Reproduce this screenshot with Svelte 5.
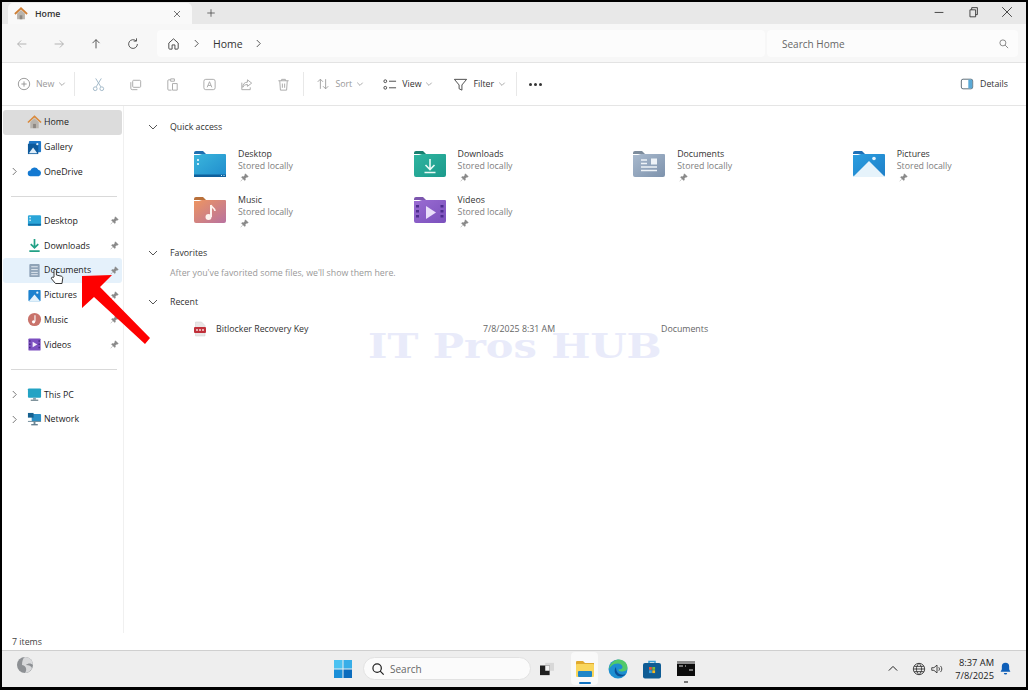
<script>
	const navTop = [
		{ name: 'Home', icon: 'home', active: true },
		{ name: 'Gallery', icon: 'gallery' },
		{ name: 'OneDrive', icon: 'cloud', arrow: true }
	];
	const pinned = [
		{ name: 'Desktop', icon: 'desktop' },
		{ name: 'Downloads', icon: 'downloads' },
		{ name: 'Documents', icon: 'documents', hover: true },
		{ name: 'Pictures', icon: 'pictures' },
		{ name: 'Music', icon: 'music' },
		{ name: 'Videos', icon: 'videos' }
	];
	const navBottom = [
		{ name: 'This PC', icon: 'pc', arrow: true },
		{ name: 'Network', icon: 'network', arrow: true }
	];
	const folders = [
		{ name: 'Desktop', tab: '#1f6fb0', from: '#3bb6dc', to: '#1f8ccd', kind: 'desktop' },
		{ name: 'Downloads', tab: '#17806f', from: '#2fb5a0', to: '#1c9a8c', kind: 'downloads' },
		{ name: 'Documents', tab: '#7d8c9c', from: '#a9bace', to: '#7d92ac', kind: 'documents' },
		{ name: 'Pictures', tab: '#1d70b8', from: '#2a9ee0', to: '#1f7fc8', kind: 'pictures' },
		{ name: 'Music', tab: '#b9703a', from: '#ee9560', to: '#b872a0', kind: 'music' },
		{ name: 'Videos', tab: '#7c56ae', from: '#9a6cd2', to: '#7a50bc', kind: 'videos' }
	];
	const actions = [
		{ d: 'M5 2l6 9M11 2L5 11' },
		{ d: 'M6 3.5h6.5a1 1 0 011 1V10a1 1 0 01-1 1H6a1 1 0 01-1-1V4.500a1 1 0 011-1zM3 5.500V12a1.500 1.500 0 001.500 1.500H10' },
		{ d: 'M5.500 3H4a1 1 0 00-1 1v9a1 1 0 001 1h3M6 2h4v2.500H6zM8 7h5v7H8z' },
		{ d: 'M4 2.500h8a2 2 0 012 2v7a2 2 0 01-2 2H4a2 2 0 01-2-2v-7a2 2 0 012-2zM5.500 11l2.500-6 2.500 6M6.500 9h3' },
		{ d: 'M9 3l4.500 3.500L9 10V8C6.500 8 5 9 4 11c0-3.500 2-5.500 5-5.500zM3 6v7.500h9V11' },
		{ d: 'M2.500 4h11M6 4V2.500h4V4M4 4l.7 10h6.600L12 4M6.800 7v4.500M9.200 7v4.500' }
	];
</script>

{#snippet pin()}
	<svg class="pin" viewBox="0 0 10 10" width="9" height="9">
		<path d="M6 .8l3.200 3.200-1 .6-.6-.2L5.800 6.200l.2 1.500-.8.7L1.600 4.800l.7-.8 1.500.2L5.600 2.400l-.2-.6zM3 6.800L.8 9.200" fill="#8a8a8a" stroke="#8a8a8a" stroke-width=".5" />
	</svg>
{/snippet}

{#snippet chevron(dir)}
	<svg class="chev {dir}" viewBox="0 0 10 10" width="10" height="10">
		<path d="M1 3l4 4 4-4" fill="none" stroke="currentColor" stroke-width="1" />
	</svg>
{/snippet}

{#snippet line(d, size = 16, color = '#5b5b5b')}
	<svg viewBox="0 0 16 16" width={size} height={size}>
		<path {d} fill="none" stroke={color} stroke-width="1" />
	</svg>
{/snippet}

{#snippet navIcon(kind)}
	<svg viewBox="0 0 16 16" width="15" height="15">
		{#if kind === 'home'}
			<path d="M3.500 7.500V14h9V7.500L8 3.500z" fill="#b9b4ad" />
			<rect x="6.500" y="9.500" width="3" height="4.500" fill="#8c8781" />
			<path d="M1 8l7-6.500L15 8" fill="none" stroke="#d98a3d" stroke-width="1.800" />
		{:else if kind === 'gallery'}
			<rect x="2" y="1" width="13" height="12" rx="1" fill="#1f78c8" />
			<rect x="1" y="4" width="11" height="11" fill="#0e5a9c" />
			<path d="M2 14l4.500-6 4.500 6z" fill="#dfeefa" />
			<circle cx="11" cy="4.500" r="1.200" fill="#dfeefa" />
		{:else if kind === 'cloud'}
			<path d="M4 13a3 3 0 01-.4-6A4.500 4.500 0 0112 6.200 3.500 3.500 0 0112.500 13z" fill="#1479d1" />
		{:else if kind === 'desktop'}
			<rect x="1" y="2.500" width="14" height="11" rx="1.200" fill="#2aa5d8" />
			<rect x="1" y="11.500" width="14" height="2" fill="#0f6ea8" />
			<rect x="2.500" y="4" width="1.600" height="1.600" fill="#d5f0fb" />
			<rect x="2.500" y="7" width="1.600" height="1.600" fill="#d5f0fb" />
		{:else if kind === 'downloads'}
			<path d="M8 1v9M4 6.500L8 10.500 12 6.500M2.500 14h11" fill="none" stroke="#22a186" stroke-width="1.800" />
		{:else if kind === 'documents'}
			<rect x="2.500" y="1" width="11" height="14" rx="1" fill="#8fa3b7" />
			<path d="M4.500 4h7M4.500 7h7M4.500 10h7M4.500 12.500h7" stroke="#e4ebf2" stroke-width="1" />
		{:else if kind === 'pictures'}
			<rect x="1.500" y="2" width="13" height="12" rx="1" fill="#1d82cf" />
			<path d="M2 14l6-7 6 7z" fill="#e4f2fb" />
			<circle cx="11" cy="5" r="1.200" fill="#e4f2fb" />
		{:else if kind === 'music'}
			<circle cx="8" cy="8" r="7" fill="#c9736b" />
			<path d="M8.500 3.500v6.500" stroke="#fff" stroke-width="1.200" />
			<circle cx="7" cy="10.500" r="1.700" fill="#fff" />
		{:else if kind === 'videos'}
			<rect x="1.500" y="1.500" width="13" height="13" rx="1" fill="#7c4fc0" />
			<path d="M6 5l5 3-5 3z" fill="#f2ecfb" />
			<path d="M3 3.500v1.500M3 7v1.500M3 10.500V12M13 3.500v1.500M13 7v1.500M13 10.500V12" stroke="#3f2379" stroke-width="1.400" />
		{:else if kind === 'pc'}
			<rect x="1" y="1.500" width="14" height="10" rx="1" fill="#23a3c4" />
			<rect x="6.500" y="11.500" width="3" height="2" fill="#8aa0aa" />
			<rect x="4" y="13.500" width="8" height="1.200" fill="#5e7681" />
		{:else}
			<rect x="5" y="2" width="10" height="8" rx="1" fill="#2a8fc6" />
			<rect x="1" y="1" width="6" height="5" fill="#15608f" />
			<rect x="1" y="9.500" width="14" height="1" fill="#6b8796" />
			<rect x="7" y="10" width="2" height="3" fill="#6b8796" />
			<rect x="4.500" y="13" width="7" height="1.200" fill="#476577" />
		{/if}
	</svg>
{/snippet}

{#snippet folderIcon(f)}
	<svg viewBox="0 0 34 28" width="34" height="28">
		<defs>
			<linearGradient id="fold-{f.kind}" x1="0" y1="0" x2="1" y2="1">
				<stop offset="0" stop-color={f.from} />
				<stop offset="1" stop-color={f.to} />
			</linearGradient>
		</defs>
		<path d="M1 3a2 2 0 012-2h7l3 3h-12z" fill={f.tab} />
		<path d="M1 5h5l3-1 4 0h19a1 1 0 011 1v20a2 2 0 01-2 2H3a2 2 0 01-2-2z" fill="url(#fold-{f.kind})" />
		{#if f.kind === 'desktop'}
			<rect x="1" y="24.500" width="32" height="2.500" fill="#0f609c" />
			<rect x="4" y="9" width="2" height="2" fill="#c9ecfa" />
			<rect x="4" y="13" width="2" height="2" fill="#c9ecfa" />
			<path d="M28 25.500h1M30.500 25.500h1" stroke="#c9ecfa" />
		{:else if f.kind === 'downloads'}
			<path d="M17 9v10M12.500 15l4.500 4.500 4.500-4.500M11.500 22.500h11" fill="none" stroke="#eafaf6" stroke-width="1.600" />
		{:else if f.kind === 'documents'}
			<path d="M9 10h6M9 13.500h6M9 17h16M9 20.500h16" stroke="#eef3f8" stroke-width="1.500" />
			<rect x="19" y="8.500" width="6" height="6" fill="#eef3f8" />
		{:else if f.kind === 'pictures'}
			<path d="M1 27L17 11l16 16z" fill="#e6f3fb" />
			<circle cx="22" cy="8.500" r="1.800" fill="#e6f3fb" />
		{:else if f.kind === 'music'}
			<path d="M18 9v12" stroke="#fdf2ee" stroke-width="2" />
			<path d="M18 9c1 3 4 3 4 6" fill="none" stroke="#fdf2ee" stroke-width="1.600" />
			<circle cx="15.500" cy="21" r="3" fill="#fdf2ee" />
		{:else}
			<path d="M13 10l10 6.500L13 23z" fill="#e9defa" />
			<path d="M4.500 9v2.500M4.500 14v2.500M4.500 19v2.500M29 9v2.500M29 14v2.500M29 19v2.500" stroke="#4d2c8e" stroke-width="3" />
		{/if}
	</svg>
{/snippet}

{#snippet navRow(item)}
	<div class="nav-row" class:active={item.active} class:hover={item.hover}>
		<span class="nav-arrow">
			{#if item.arrow}
				<svg viewBox="0 0 8 10" width="7" height="9"><path d="M2 1l4 4-4 4" fill="none" stroke="#666" /></svg>
			{/if}
		</span>
		{@render navIcon(item.icon)}
		<span class="nav-name">{item.name}</span>
		{#if item.pin}{@render pin()}{/if}
	</div>
{/snippet}

<div class="frame">
	<div class="window">
		<header class="titlebar">
			<div class="tab">
				<svg viewBox="0 0 16 16" width="14" height="14">
					<path d="M3.500 7.500V14h9V7.500L8 3.500z" fill="#b9b4ad" />
					<rect x="6.500" y="9.500" width="3" height="4.500" fill="#8c8781" />
					<path d="M1 8l7-6.500L15 8" fill="none" stroke="#cf7f35" stroke-width="2" />
				</svg>
				<span class="tab-name">Home</span>
				<span class="tab-close">{@render line('M4 4l8 8M12 4l-8 8', 12, '#444')}</span>
			</div>
			<span class="tab-add">{@render line('M8 3v10M3 8h10', 12, '#444')}</span>
			<div class="win-controls">
				{@render line('M3 8.500h10', 14, '#333')}
				{@render line('M4.500 5.500h6.500v8H4.500zM6.500 5.500V3h6.500v8H11', 14, '#333')}
				{@render line('M2.500 2.500l11 11M13.500 2.500l-11 11', 14, '#333')}
			</div>
		</header>

		<div class="addressbar">
			<div class="nav-buttons">
				<span>{@render line('M13 8H3M7 4L3 8l4 4', 14, '#aaa')}</span>
				<span>{@render line('M3 8h10M9 4l4 4-4 4', 14, '#aaa')}</span>
				<span>{@render line('M8 13V3M4 7l4-4 4 4', 14, '#444')}</span>
				<span>{@render line('M13 8a5 5 0 11-1.500-3.500M12 1.500v3.200H8.800', 14, '#444')}</span>
			</div>
			<div class="crumbs">
				{@render line('M3 7.500L8 3l5 4.500V13a1 1 0 01-1 1h-2.500V9.500h-3V14H4a1 1 0 01-1-1z', 15, '#444')}
				<svg class="crumb-sep" viewBox="0 0 8 10" width="7" height="9"><path d="M2 1l4 4-4 4" fill="none" stroke="#444" /></svg>
				<span class="crumb">Home</span>
				<svg class="crumb-sep" viewBox="0 0 8 10" width="7" height="9"><path d="M2 1l4 4-4 4" fill="none" stroke="#444" /></svg>
			</div>
			<div class="search-home">
				<span>Search Home</span>
				{@render line('M6.500 2.500a4 4 0 100 8 4 4 0 000-8zM9.500 9.500l4 4', 12, '#666')}
			</div>
		</div>

		<div class="commandbar">
			<div class="cmd new dim">
				{@render line('M8 1.500a6.500 6.500 0 100 13 6.500 6.500 0 000-13zM8 5v6M5 8h6', 14, '#8f8f8f')}
				<span>New</span>
				<span class="small-chev">{@render chevron('down')}</span>
			</div>
			<i class="sep first"></i>
			<div class="actions">
				{#each actions as a, i}
					<span class="action">
						{#if i === 0}
							<svg viewBox="0 0 16 16" width="15" height="15">
								<path d="M5 1.500l5.500 9M11 1.500l-5.500 9" fill="none" stroke="#9fb6c6" />
								<circle cx="4.500" cy="12.500" r="2" fill="none" stroke="#9fb6c6" />
								<circle cx="11.500" cy="12.500" r="2" fill="none" stroke="#9fb6c6" />
							</svg>
						{:else}
							{@render line(a.d, 15, '#a9a9a9')}
						{/if}
					</span>
				{/each}
			</div>
			<i class="sep second"></i>
			<div class="cmd sort dim">
				{@render line('M5 13.500V2.500M2 5.500l3-3 3 3M11 2.500v11M8 10.500l3 3 3-3', 14, '#9a9a9a')}
				<span>Sort</span>
				<span class="small-chev">{@render chevron('down')}</span>
			</div>
			<div class="cmd view">
				{@render line('M3.500 3a1.500 1.500 0 100 3 1.500 1.500 0 000-3zM3.500 10a1.500 1.500 0 100 3 1.500 1.500 0 000-3zM7.500 4.500H15M7.500 11.500H15', 15, '#444')}
				<span>View</span>
				<span class="small-chev">{@render chevron('down')}</span>
			</div>
			<div class="cmd filter">
				{@render line('M1.500 2.500h13L9.500 8.500v5.500l-3-1.500v-4z', 15, '#444')}
				<span>Filter</span>
				<span class="small-chev">{@render chevron('down')}</span>
			</div>
			<i class="sep third"></i>
			<span class="dots"><b></b><b></b><b></b></span>
			<div class="details">
				<svg viewBox="0 0 16 16" width="14" height="14">
					<rect x="1.500" y="2.500" width="13" height="11" rx="2" fill="none" stroke="#4a5c68" />
					<rect x="9.500" y="3" width="4.500" height="10" fill="#5aa9d6" />
				</svg>
				<span>Details</span>
			</div>
		</div>

		<div class="body">
			<nav class="sidebar">
				{#each navTop as item}{@render navRow(item)}{/each}
				<hr class="upper" />
				{#each pinned as item}{@render navRow({ ...item, pin: true })}{/each}
				<hr />
				{#each navBottom as item}{@render navRow(item)}{/each}
			</nav>
			<main class="content">
				<div class="section-head">{@render chevron('down')}<span>Quick access</span></div>
				<div class="tiles">
					{#each folders as f}
						<div class="tile">
							{@render folderIcon(f)}
							<div class="tile-text">
								<span class="tile-name">{f.name}</span>
								<span class="tile-sub">Stored locally</span>
								{@render pin()}
							</div>
						</div>
					{/each}
				</div>
				<div class="section-head favorites">{@render chevron('down')}<span>Favorites</span></div>
				<p class="empty">After you've favorited some files, we'll show them here.</p>
				<div class="section-head recent">{@render chevron('down')}<span>Recent</span></div>
				<div class="recent-row">
					<svg viewBox="0 0 14 16" width="14" height="16">
						<path d="M2.500 1h6l3.500 3.500V15h-9.500z" fill="#e9e6e6" stroke="#cfcfcf" stroke-width=".5" />
						<rect x="1" y="6" width="12" height="6" rx="1" fill="#c0303a" />
						<path d="M3 9h8" stroke="#f6d6d8" stroke-width="1.500" stroke-dasharray="2 1" />
					</svg>
					<span class="recent-name">Bitlocker Recovery Key</span>
					<span class="recent-date">7/8/2025 8:31 AM</span>
					<span class="recent-loc">Documents</span>
				</div>
			</main>
		</div>

		<div class="statusbar">7 items</div>
	</div>

	<footer class="taskbar">
		<svg class="widget" viewBox="0 0 18 18" width="18" height="18">
			<circle cx="9" cy="9" r="8" fill="#8d9094" />
			<path d="M9 1a8 8 0 018 8c-2-2-5-2-7 0 3 0 5 1 6 3a8 8 0 01-7 5c3-4 0-8-3-8 0-4 1-7 3-8z" fill="#d8d9db" />
		</svg>
		<svg class="start" viewBox="0 0 18 18" width="18" height="18">
			<rect x="0" y="0" width="8.500" height="8.500" fill="#4cc2f1" />
			<rect x="9.500" y="0" width="8.500" height="8.500" fill="#38aee8" />
			<rect x="0" y="9.500" width="8.500" height="8.500" fill="#1a8fd8" />
			<rect x="9.500" y="9.500" width="8.500" height="8.500" fill="#0b6cbd" />
		</svg>
		<div class="task-search">
			<svg viewBox="0 0 16 16" width="14" height="14">
				<circle cx="7" cy="7" r="4.800" fill="none" stroke="#222" stroke-width="1.400" />
				<path d="M10.500 10.500l4 4" stroke="#222" stroke-width="1.400" />
			</svg>
			<span>Search</span>
		</div>
		<svg class="taskview" viewBox="0 0 18 16" width="16" height="14">
			<rect x="7" y="1" width="10" height="9" fill="#d8d8d8" />
			<rect x="1" y="4" width="11" height="11" fill="#1f1f1f" />
			<rect x="7" y="4" width="5" height="6" fill="#f2f2f2" />
		</svg>
		<div class="task-app open">
			<svg viewBox="0 0 20 18" width="20" height="18">
				<path d="M1 2a1 1 0 011-1h6l2 2h9v13H1z" fill="#e0a92e" />
				<rect x="1" y="4" width="18" height="13" rx="1" fill="#f9d65c" />
				<rect x="3" y="11" width="14" height="6" rx="1" fill="#1f86c8" />
			</svg>
			<i class="running"></i>
		</div>
		<svg class="edge" viewBox="0 0 20 20" width="20" height="20">
			<circle cx="10" cy="10" r="9.500" fill="#1d8fd1" />
			<path d="M1 11C1 5 6 .5 11 .5c5 0 8.500 4 8.500 8 0 3-3 4-6 4-2 0-3-1-3-2 3 0 4-1 4-2.500C14.500 6 12 4.500 9.500 4.500 5 4.500 1.500 8 1 11z" fill="#52c96a" />
			<path d="M8 8c-2 2-2 7 2 9 3 1 6 0 8-2-3 1-6 1-8-1-1.500-1.500-2-4-2-6z" fill="#0b4f94" />
		</svg>
		<svg class="store" viewBox="0 0 18 20" width="18" height="20">
			<path d="M6 5V2.500h6V5" fill="none" stroke="#3aa0d6" stroke-width="1.500" />
			<rect x="0" y="4" width="18" height="15.500" rx="2" fill="#0f5c94" />
			<rect x="6" y="8" width="2.800" height="2.800" fill="#e9553a" />
			<rect x="9.300" y="8" width="2.800" height="2.800" fill="#7bbb3a" />
			<rect x="6" y="11.300" width="2.800" height="2.800" fill="#3aa0e0" />
			<rect x="9.300" y="11.300" width="2.800" height="2.800" fill="#f5b921" />
		</svg>
		<div class="terminal">
			<svg viewBox="0 0 18 15" width="18" height="15">
				<rect x="0" y="0" width="18" height="15" fill="#0c0c0c" />
				<rect x="0" y="0" width="18" height="3" fill="#8d8d8d" />
				<path d="M2 5h4M8 5h1M12 9h4" stroke="#ddd" stroke-width="1" />
			</svg>
			<i></i>
		</div>
		<div class="tray">
			<svg viewBox="0 0 12 8" width="10" height="7"><path d="M1 6.500l5-5 5 5" fill="none" stroke="#222" stroke-width="1.200" /></svg>
			<span class="globe">{@render line('M8 1.500a6.500 6.500 0 100 13 6.500 6.500 0 000-13zM1.500 8h13M8 1.500c-4 4-4 9 0 13M8 1.500c4 4 4 9 0 13M2.500 5h11M2.500 11h11', 14, '#333')}</span>
			<span class="volume">{@render line('M2 6.500h2.500L8 3.500v9l-3.500-3H2zM10 6c1 1 1 3 0 4M12 4.500c2 2 2 5 0 7', 14, '#333')}</span>
			<div class="clock"><span>8:37 AM</span><span>7/8/2025</span></div>
			<svg class="bell" viewBox="0 0 16 16" width="13" height="13">
				<path d="M8 1a4.500 4.500 0 00-4.500 4.500V9L2 12h12l-1.500-3V5.500A4.500 4.500 0 008 1z" fill="#0f5fb8" />
				<path d="M6 13.500a2 2 0 004 0z" fill="#0f5fb8" />
			</svg>
		</div>
	</footer>

	<span class="watermark">IT Pros HUB</span>
	<svg class="arrow" viewBox="0 0 80 80" width="80" height="80">
		<polygon points="2,6 32,5 20,17 70,68 65,74 14,27 2,38" fill="#fe0000" />
	</svg>
	<svg class="hand" viewBox="0 0 14 18" width="14" height="18">
		<path d="M4 9V2.500a1.200 1.200 0 012.400 0V7l5 1.200c1 .3 1.500 1 1.300 2L12 15.500H5.500L1.500 10.800c-.7-1 .7-2.200 1.600-1.300z" fill="#fff" stroke="#222" stroke-width=".9" />
	</svg>
</div>

<style>
	:global(body) {
		margin: 0;
		background: #000;
	}

	.frame {
		position: relative;
		box-sizing: border-box;
		width: 1028px;
		height: 690px;
		padding: 2px 2px 3px;
		display: flex;
		flex-direction: column;
		background: #000;
		font-family: 'Open Sans', 'Noto Sans', sans-serif;
		font-size: 8.800px;
		color: #333;
		overflow: hidden;
	}

	.window {
		flex: 1;
		min-height: 0;
		display: flex;
		flex-direction: column;
		background: #fff;
	}

	svg {
		flex: none;
		display: block;
	}

	/* title bar */
	.titlebar {
		height: 22px;
		flex: none;
		display: flex;
		align-items: flex-end;
		padding-left: 6px;
		background: #e8e8e8;
	}

	.tab {
		width: 184px;
		height: 21px;
		box-sizing: border-box;
		padding: 0 9px 0 6px;
		display: flex;
		align-items: center;
		background: #f9f9f9;
		border-radius: 5px 5px 0 0;
	}

	.tab-name {
		margin-left: 7px;
		font-weight: 600;
		color: #333;
	}

	.tab-close {
		margin-left: auto;
	}

	.tab-add {
		margin: 0 0 5px 13px;
	}

	.win-controls {
		margin-left: auto;
		padding: 0 12px 5px 0;
		display: flex;
		gap: 20px;
	}

	/* address row */
	.addressbar {
		height: 39px;
		flex: none;
		box-sizing: border-box;
		padding: 6px 8px 5px 0;
		display: flex;
		background: #f7f7f7;
		border-bottom: 1px solid #e3e3e3;
	}

	.nav-buttons {
		width: 155px;
		box-sizing: border-box;
		padding-left: 13px;
		display: flex;
		align-items: center;
		gap: 23px;
	}

	.crumbs {
		width: 608px;
		display: flex;
		align-items: center;
		padding-left: 9px;
		box-sizing: border-box;
		background: #fcfcfc;
		border-radius: 4px;
	}

	.crumb {
		margin: 0 12px 0 13px;
		font-size: 10.500px;
		font-weight: 500;
	}

	.crumb-sep {
		margin-left: 12px;
	}

	.crumb + .crumb-sep {
		margin-left: 0;
	}

	.search-home {
		flex: 1;
		margin-left: 2px;
		padding: 0 8px 0 15px;
		display: flex;
		align-items: center;
		justify-content: space-between;
		background: #fcfcfc;
		border-radius: 4px;
		color: #666;
		font-size: 10px;
	}

	/* command bar */
	.commandbar {
		height: 43px;
		flex: none;
		box-sizing: border-box;
		display: flex;
		align-items: center;
		padding-left: 15px;
		border-bottom: 1px solid #e5e5e5;
	}

	.cmd {
		display: flex;
		align-items: center;
		gap: 5px;
		color: #333;
	}

	.cmd.dim {
		color: #999;
	}

	.small-chev {
		color: #888;
		transform: scale(0.7);
		margin-left: -2px;
	}

	.sep {
		width: 1px;
		height: 24px;
		background: #e8e8e8;
	}

	.sep.first {
		margin-left: 7px;
	}

	.actions {
		margin-left: 16px;
		display: flex;
		gap: 22px;
	}

	.sep.second {
		margin-left: 12px;
	}

	.cmd.sort {
		margin-left: 12px;
	}

	.cmd.view {
		margin-left: 17px;
	}

	.cmd.filter {
		margin-left: 19px;
	}

	.sep.third {
		margin-left: 9px;
	}

	.dots {
		margin-left: 12px;
		display: flex;
		gap: 2px;
	}

	.dots b {
		width: 3px;
		height: 3px;
		border-radius: 50%;
		background: #333;
	}

	.details {
		margin: 0 18px 0 auto;
		display: flex;
		align-items: center;
		gap: 6px;
	}

	/* body */
	.body {
		flex: 1;
		min-height: 0;
		display: flex;
	}

	.sidebar {
		width: 122px;
		box-sizing: border-box;
		padding: 4px 1px 0;
		border-right: 1px solid #f0f0f0;
		flex: none;
	}

	.nav-row {
		height: 24.800px;
		width: 119px;
		box-sizing: border-box;
		padding-right: 3px;
		display: flex;
		align-items: center;
		border-radius: 3px;
	}

	.nav-row.active {
		background: #dcdcdc;
	}

	.nav-row.hover {
		background: #e5f1fb;
	}

	.nav-arrow {
		width: 24px;
		padding-left: 8px;
		box-sizing: border-box;
	}

	.nav-name {
		margin-left: 2px;
		color: #222;
	}

	.nav-row .pin {
		margin-left: auto;
	}

	hr {
		width: 106px;
		height: 1px;
		margin: 12px 0 12px 8px;
		border: 0;
		background: #d9d9d9;
	}

	hr.upper {
		margin-bottom: 11px;
	}

	.content {
		flex: 1;
		padding: 12px 0 0 24px;
	}

	.section-head {
		height: 18px;
		display: flex;
		align-items: center;
		gap: 12px;
		font-weight: 500;
		color: #333;
	}

	.section-head .chev {
		color: #555;
	}

	.tiles {
		width: 880px;
		display: grid;
		grid-template-columns: repeat(4, 219.600px);
		grid-auto-rows: 46px;
		margin-top: 8px;
		padding-left: 45px;
		box-sizing: border-box;
	}

	.tile {
		display: flex;
		align-items: flex-start;
		gap: 11px;
		padding-top: 5px;
	}

	.tile svg {
		margin-top: 1px;
	}

	.tile-text {
		display: flex;
		flex-direction: column;
		margin-top: -1px;
		line-height: 12px;
	}

	.tile-name {
		color: #333;
	}

	.tile-sub {
		color: #808080;
	}

	.tile-text .pin {
		margin: 1px 0 0 2px;
	}

	.favorites {
		margin-top: 8px;
	}

	.empty {
		margin: 2px 0 0 22px;
		line-height: 18px;
		color: #999;
	}

	.section-head.recent {
		margin-top: 11px;
	}

	.recent-row {
		margin-top: 9px;
		padding-left: 45px;
		height: 18px;
		display: flex;
		align-items: center;
	}

	.recent-name {
		margin-left: 9px;
		width: 267px;
	}

	.recent-date {
		width: 178px;
		color: #666;
	}

	.recent-loc {
		color: #666;
	}

	.statusbar {
		height: 17px;
		flex: none;
		padding-left: 10px;
		line-height: 19px;
		color: #444;
	}

	/* taskbar */
	.taskbar {
		height: 37px;
		flex: none;
		box-sizing: border-box;
		display: flex;
		align-items: center;
		padding: 0 0 1px 14px;
		background: #eeeeee;
		border-top: 1px solid #cfcfcf;
	}

	.widget {
		margin-top: -8px;
	}

	.start {
		margin-left: 300px;
	}

	.task-search {
		width: 168px;
		height: 23px;
		margin-left: 11px;
		box-sizing: border-box;
		padding-left: 7px;
		display: flex;
		align-items: center;
		gap: 5px;
		background: #fbfbfb;
		border: 1px solid #e2e2e2;
		border-radius: 12px;
		color: #666;
		font-size: 10px;
	}

	.taskview {
		margin-left: 8px;
	}

	.task-app {
		position: relative;
		width: 27px;
		height: 33px;
		margin-left: 16px;
		display: flex;
		align-items: center;
		justify-content: center;
		background: #f9f9f9;
		border-radius: 4px;
	}

	.running {
		position: absolute;
		left: 8px;
		bottom: 1px;
		width: 12px;
		height: 2px;
		border-radius: 1px;
		background: #1172c0;
	}

	.edge {
		margin-left: 10px;
	}

	.store {
		margin-left: 15px;
	}

	.terminal {
		position: relative;
		margin-left: 16px;
	}

	.terminal i {
		position: absolute;
		left: 7px;
		bottom: -7px;
		width: 4px;
		height: 2px;
		background: #777;
	}

	.tray {
		margin-left: auto;
		padding-right: 14px;
		display: flex;
		align-items: center;
		color: #222;
	}

	.globe {
		margin-left: 14px;
	}

	.volume {
		margin-left: 4px;
	}

	.clock {
		width: 45px;
		margin-left: 5px;
		display: flex;
		flex-direction: column;
		align-items: flex-end;
		line-height: 13px;
		font-size: 9.300px;
	}

	.bell {
		margin-left: 5px;
	}

	/* overlays */
	.watermark {
		position: absolute;
		left: 368px;
		top: 332px;
		font: bold 34px/28px 'DejaVu Serif', serif;
		color: #e9ebfa;
		white-space: nowrap;
		transform-origin: left;
		transform: scaleX(1.22);
	}

	.arrow {
		position: absolute;
		left: 80px;
		top: 270px;
	}

	.hand {
		position: absolute;
		left: 50px;
		top: 268px;
	}
</style>
